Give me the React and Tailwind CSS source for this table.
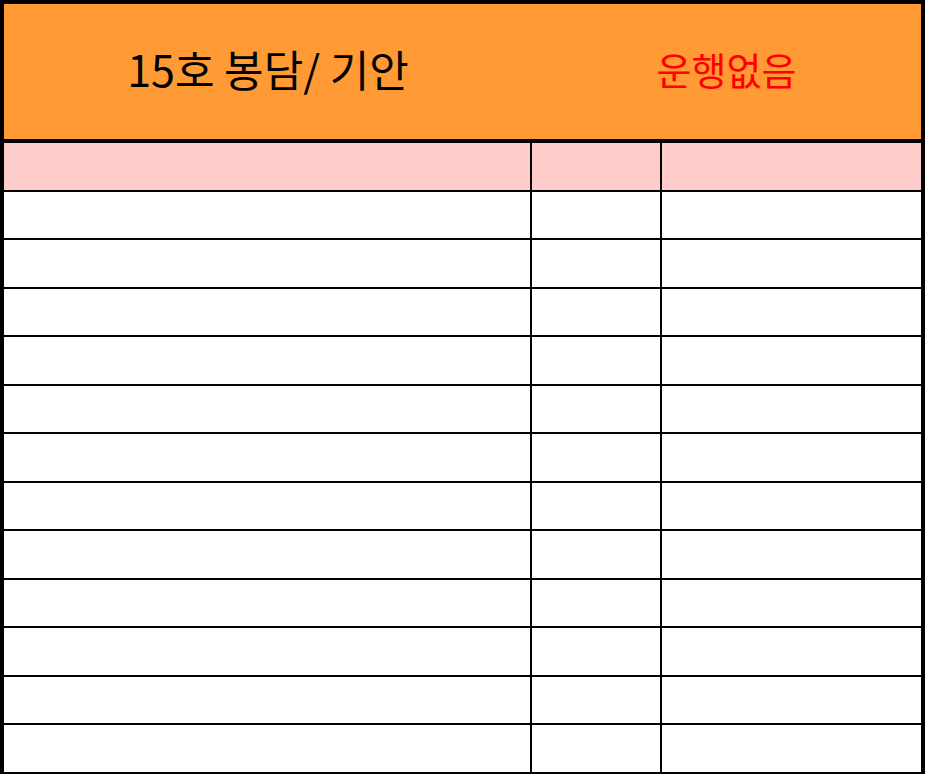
import React from "react";

const rows = Array.from({ length: 12 });

const Row = ({ pink }) => (
  <div className={`flex h-[48.5px] border-b-2 border-black ${pink ? "bg-[#ffcccc]" : "bg-white"}`}>
    <div className="w-[528px] border-r-2 border-black" />
    <div className="w-[130px] border-r-2 border-black" />
    <div className="flex-1" />
  </div>
);

export default function App() {
  return (
    <div
      className="w-[925px] h-[774px] overflow-hidden bg-white"
      style={{ fontFamily: '"Noto Sans CJK KR", "Noto Sans", sans-serif' }}
    >
      <div className="border-x-4 border-t-4 border-black">
        {/* header */}
        <div className="flex h-[139px] bg-[#ff9a35] border-b-4 border-black">
          <div className="w-[528px] pb-[6px] flex items-center justify-center text-[43px] text-black">
            15호 봉담/ 기안
          </div>
          <div className="flex-1 pb-[6px] flex items-center justify-center text-[38px] text-[#ff0000]">
            운행없음
          </div>
        </div>

        <Row pink />
        {rows.map((_, i) => (
          <Row key={i} />
        ))}
      </div>
    </div>
  );
}
